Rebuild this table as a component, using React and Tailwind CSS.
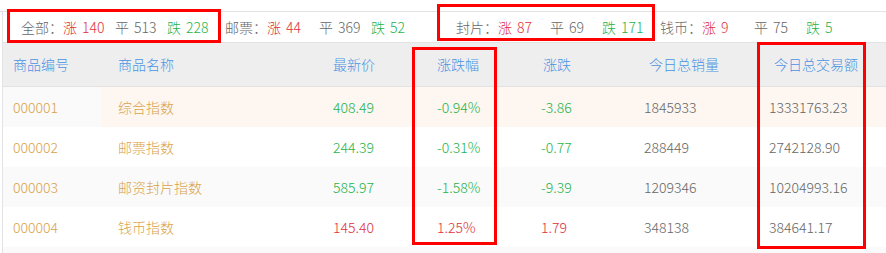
import React from "react";

const RED = "text-[#e0303a]";
const GREEN = "text-[#1fb34a]";
const GRAY = "text-[#666666]";

const groups = [
  { label: "全部：", up: "140", flat: "513", down: "228", ml: "ml-0" },
  { label: "邮票：", up: "44", flat: "369", down: "52", ml: "ml-[6px]" },
  { label: "封片：", up: "87", flat: "69", down: "171", ml: "ml-[33px]" },
  { label: "钱币：", up: "9", flat: "75", down: "5", ml: "ml-[6px]" },
];

const rows = [
  { code: "000001", name: "综合指数", price: "408.49", pct: "-0.94%", chg: "-3.86", vol: "1845933", amt: "13331763.23", up: false, bg: "bg-[#fdf6f1]", firstBg: "bg-[#fafafa]" },
  { code: "000002", name: "邮票指数", price: "244.39", pct: "-0.31%", chg: "-0.77", vol: "288449", amt: "2742128.90", up: false, bg: "bg-white", firstBg: "bg-white" },
  { code: "000003", name: "邮资封片指数", price: "585.97", pct: "-1.58%", chg: "-9.39", vol: "1209346", amt: "10204993.16", up: false, bg: "bg-[#fafafa]", firstBg: "bg-[#fafafa]" },
  { code: "000004", name: "钱币指数", price: "145.40", pct: "1.25%", chg: "1.79", vol: "348138", amt: "384641.17", up: true, bg: "bg-white", firstBg: "bg-white" },
];

function Summary() {
  return (
    <div className="h-[31px] flex items-center pl-[18px] border-b border-[#e3e3e3] text-[14px]">
      {groups.map((g) => (
        <div key={g.label} className={`flex items-center ${g.ml}`}>
          <span className={`w-[42px] ${GRAY}`}>{g.label}</span>
          <span className={`w-[52px] ${RED}`}>涨<span className="ml-[5px]">{g.up}</span></span>
          <span className={`w-[52px] ${GRAY}`}>平<span className="ml-[5px]">{g.flat}</span></span>
          <span className={`w-[52px] ${GREEN}`}>跌<span className="ml-[5px]">{g.down}</span></span>
        </div>
      ))}
    </div>
  );
}

function Header() {
  const c = "text-[#4a93e3]";
  return (
    <div className={`h-[44px] flex items-center bg-[#eeeeee] border-b border-[#e2e2e2] text-[14px] ${c}`}>
      <div className="w-[99px] pl-[10px]">商品编号</div>
      <div className="w-[218px] pl-[16px]">商品名称</div>
      <div className="w-[104px] pl-[13px]">最新价</div>
      <div className="w-[104px] pl-[13px]">涨跌幅</div>
      <div className="w-[103px] pl-[15px]">涨跌</div>
      <div className="w-[125px] pl-[18px]">今日总销量</div>
      <div className="flex-1 pl-[18px]">今日总交易额</div>
    </div>
  );
}

function Row({ r }) {
  const color = r.up ? RED : GREEN;
  return (
    <div className={`h-[40px] flex items-center text-[14px] ${r.bg}`}>
      <div className={`w-[99px] h-full flex items-center pl-[10px] text-[#d9a24b] ${r.firstBg}`}>{r.code}</div>
      <div className="w-[218px] pl-[16px] text-[#d9a24b]">{r.name}</div>
      <div className={`w-[104px] pl-[13px] ${color}`}>{r.price}</div>
      <div className={`w-[104px] pl-[13px] ${color}`}>{r.pct}</div>
      <div className={`w-[103px] pl-[13px] ${color}`}>{r.chg}</div>
      <div className={`w-[125px] pl-[13px] ${GRAY}`}>{r.vol}</div>
      <div className={`flex-1 pl-[13px] ${GRAY}`}>{r.amt}</div>
    </div>
  );
}

export default function App() {
  return (
    <div
      className="relative w-[886px] h-[253px] bg-white overflow-hidden font-light"
      style={{ fontFamily: '"Noto Sans CJK SC", "Noto Sans", sans-serif' }}
    >
      <div className="pt-[11px]">
        <div className="border-t border-[#e3e3e3]">
          <div className="ml-[2px] border-l border-[#e3e3e3]">
            <Summary />
            <Header />
            {rows.map((r) => (
              <Row key={r.code} r={r} />
            ))}
            <div className="h-[40px] bg-[#fafafa]" />
          </div>
        </div>
      </div>

      <div className="absolute left-[7px] top-[9px] w-[214px] h-[34px] border-[3px] border-[#ff0000]" />
      <div className="absolute left-[437px] top-[4px] w-[218px] h-[37px] border-[3px] border-[#ff0000]" />
      <div className="absolute left-[412px] top-[47px] w-[85px] h-[198px] border-[3px] border-[#ff0000]" />
      <div className="absolute left-[757px] top-[42px] w-[109px] h-[207px] border-[3px] border-[#ff0000]" />
    </div>
  );
}
